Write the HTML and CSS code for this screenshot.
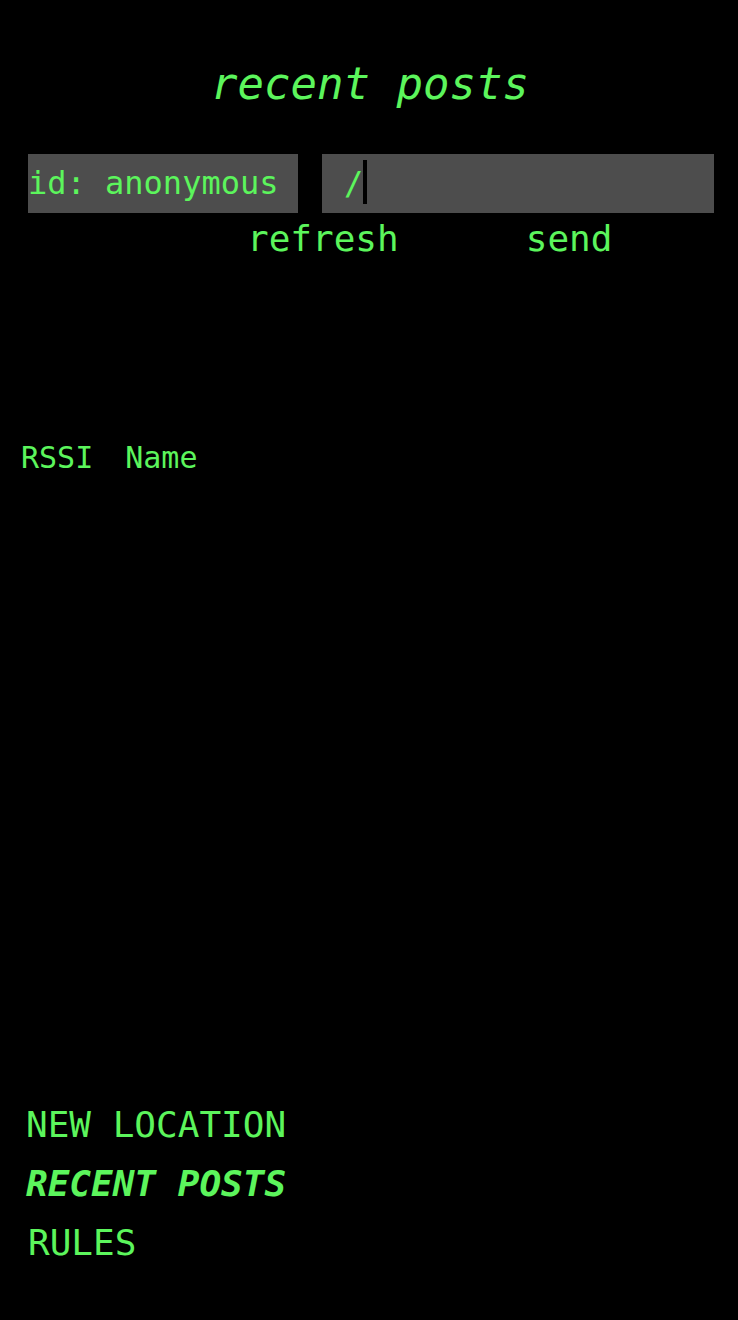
FILE: index.html
```html
<!DOCTYPE html>
<html lang="en">
<head>
<meta charset="utf-8">
<title>recent posts</title>
<link rel="stylesheet" href="styles.css">
</head>
<body>
<div class="screen">
  <h1 class="title">recent posts</h1>
  <div class="compose">
    <div class="ident">id: anonymous</div>
    <div class="message"><span class="slash">/</span><span class="cursor"></span></div>
  </div>
  <div class="actions">
    <span class="action">refresh</span>
    <span class="action">send</span>
  </div>
  <div class="list">
    <div class="list-head">
      <span class="col">RSSI</span>
      <span class="col">Name</span>
    </div>
  </div>
  <nav class="nav">
    <div class="nav-item">NEW LOCATION</div>
    <div class="nav-item active">RECENT POSTS</div>
    <div class="nav-item rules">RULES</div>
  </nav>
</div>
</body>
</html>
```

FILE: styles.css
```css
html, body {
  margin: 0;
  padding: 0;
  background: #000;
}

.screen {
  height: 100vh;
  display: flex;
  flex-direction: column;
  font-family: "DejaVu Sans Mono", monospace;
  color: #5cf55c;
}

.title {
  margin: 58px 0 0 2px;
  font-size: 44px;
  line-height: 52px;
  font-weight: normal;
  font-style: italic;
  text-align: center;
}

.compose {
  display: flex;
  gap: 24px;
  margin: 44px 24px 0 28px;
  height: 59px;
}

.ident {
  width: 270px;
  background: #4d4d4d;
  font-size: 32px;
  line-height: 59px;
  white-space: nowrap;
  overflow: hidden;
}

.message {
  flex: 1;
  background: #4d4d4d;
  display: flex;
  align-items: center;
  padding-left: 22px;
  font-size: 32px;
}

.slash {
  line-height: 59px;
}

.cursor {
  width: 4px;
  height: 44px;
  background: #000;
  margin-top: -3px;
}

.actions {
  display: flex;
  gap: 127px;
  margin: 5px 0 0 247px;
  font-size: 36px;
  line-height: 42px;
}

.list {
  flex: 1;
  padding-top: 181px;
}

.list-head {
  display: flex;
  gap: 32px;
  padding-left: 21px;
  font-size: 30px;
  line-height: 34px;
}

.nav {
  padding: 0 0 48px 26px;
  font-size: 36px;
  line-height: 59px;
}

.nav-item.active {
  font-weight: bold;
  font-style: italic;
}

.nav-item.rules {
  padding-left: 2px;
}
```
